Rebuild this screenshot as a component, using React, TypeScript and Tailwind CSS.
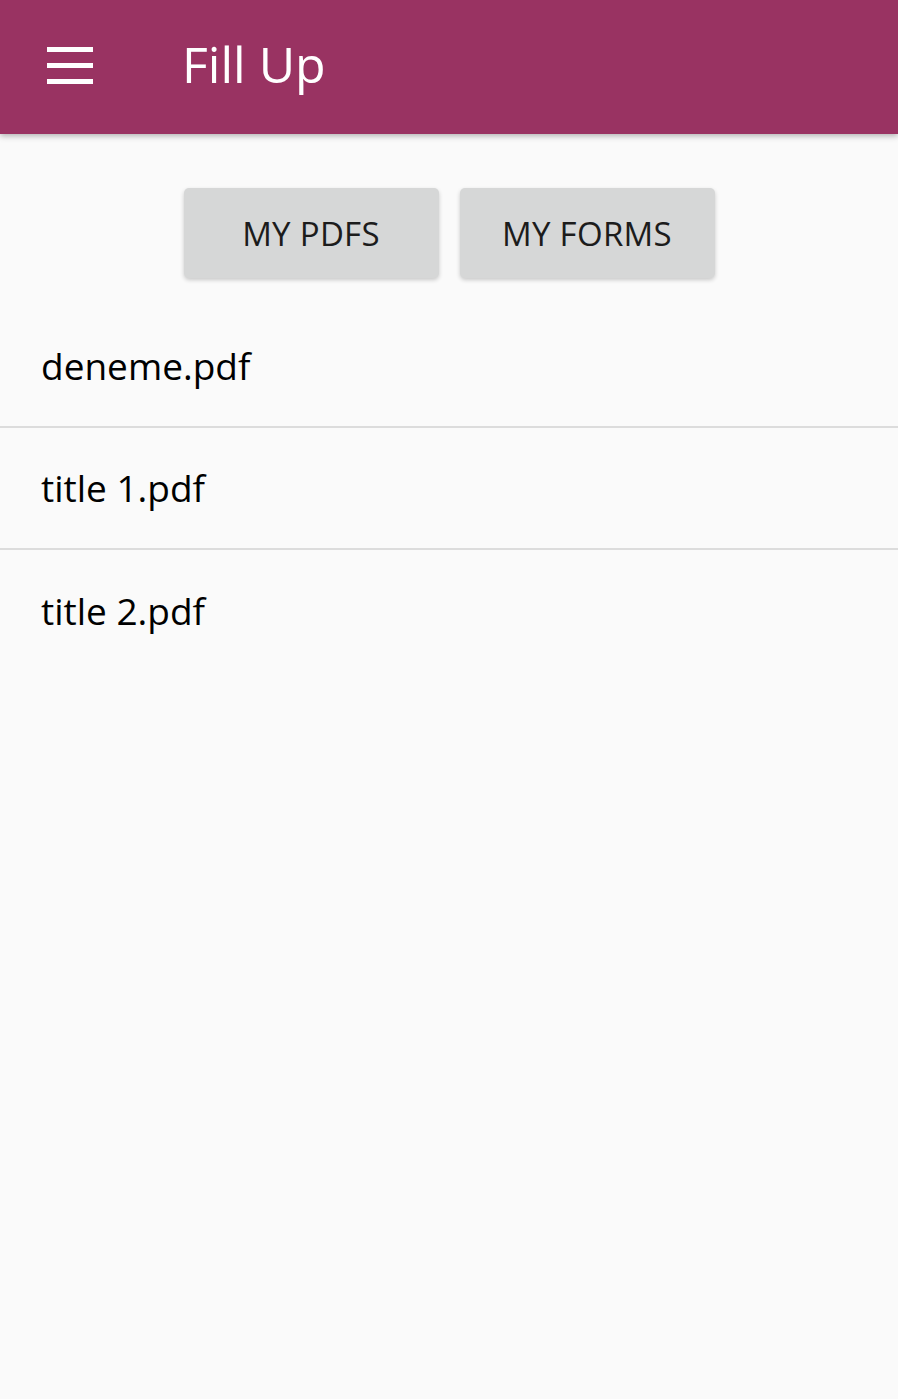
import React from 'react';

const files = ['deneme.pdf', 'title 1.pdf', 'title 2.pdf'];

const App: React.FC = () => {
  return (
    <div className="min-h-[1399px] bg-[#fafafa] font-['Open_Sans',sans-serif]">
      <header className="h-[134px] bg-[#993362] flex items-center shadow-[0_2px_6px_rgba(0,0,0,0.3)] relative">
        <div className="w-[46px] ml-[47px] flex flex-col gap-[11px] -mt-[3px]">
          <span className="block h-[5px] bg-white" />
          <span className="block h-[5px] bg-white" />
          <span className="block h-[5px] bg-white" />
        </div>
        <h1 className="ml-[89px] -mt-[6px] text-white text-[50px] leading-none">Fill Up</h1>
      </header>

      <div className="flex justify-center gap-[21px] pt-[54px]">
        <button className="w-[255px] h-[90px] bg-[#d6d7d7] rounded-[5px] shadow-[0_2px_4px_rgba(0,0,0,0.2)] text-[#1c1c1c] text-[33px] tracking-[0.3px] pt-[2px]">
          MY PDFS
        </button>
        <button className="w-[255px] h-[90px] bg-[#d6d7d7] rounded-[5px] shadow-[0_2px_4px_rgba(0,0,0,0.2)] text-[#1c1c1c] text-[33px] tracking-[0.3px] pt-[2px]">
          MY FORMS
        </button>
      </div>

      <ul className="mt-[28px]">
        {files.map((f, i) => (
          <li
            key={f}
            className={`h-[122px] flex items-center pl-[41px] text-[37px] text-black ${i < files.length - 1 ? 'border-b-2 border-[#dcdcdc]' : ''}`}
          >
            {f}
          </li>
        ))}
      </ul>
    </div>
  );
};

export default App;
